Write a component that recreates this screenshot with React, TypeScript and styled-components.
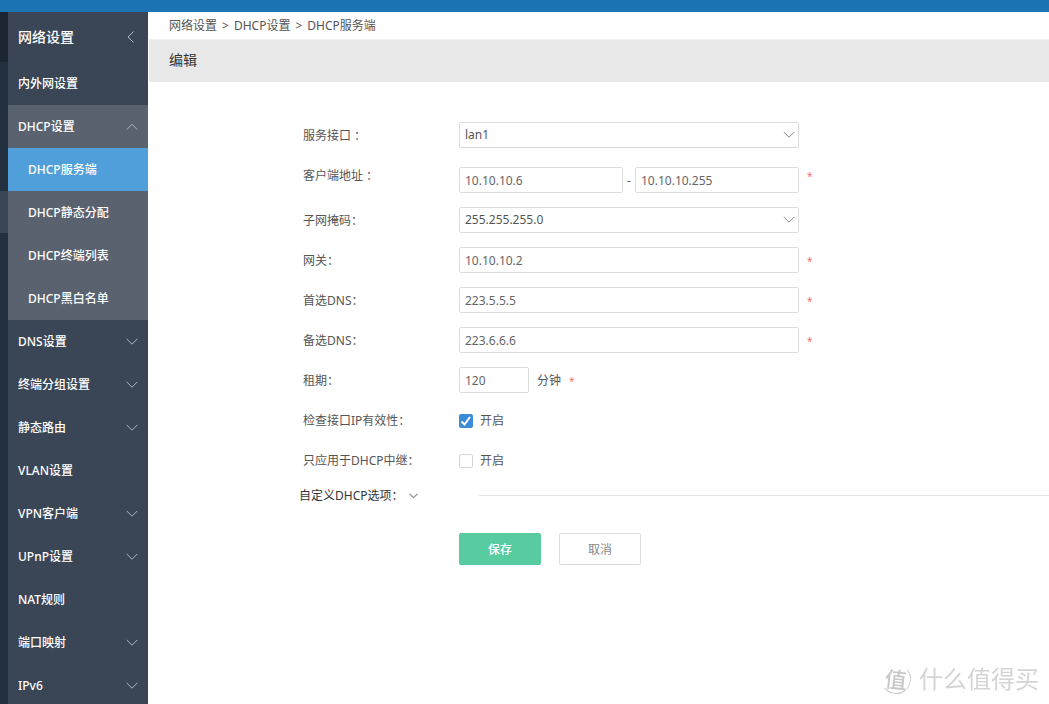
import React, { useState } from "react";
import styled, { createGlobalStyle } from "styled-components";

const GlobalStyle = createGlobalStyle`
  * { box-sizing: border-box; }
  body {
    margin: 0;
    background: #fff;
    color: #555;
    font: 12px/18px "Noto Sans", "Noto Sans CJK SC", sans-serif;
  }
  input, select, button { font: inherit; color: inherit; }
`;

const Page = styled.div`
  display: flex;
  flex-direction: column;
  height: 100vh;
`;

const TopBar = styled.header`
  flex: none;
  height: 12px;
  background: #1d74b4;
`;

const Body = styled.div`
  flex: 1;
  display: flex;
  min-height: 0;
`;

const Rail = styled.div`
  flex: none;
  width: 8px;
  background: #223040;
`;

const RailSlot = styled.div<{ $height: number; $color?: string }>`
  height: ${(p) => p.$height}px;
  background: ${(p) => p.$color || "transparent"};
`;

const Sidebar = styled.nav`
  flex: none;
  width: 140px;
  overflow-y: auto;
  scrollbar-width: none;
  background: #3a4656;
  color: #fff;
`;

const SidebarTitle = styled.div`
  display: flex;
  align-items: center;
  justify-content: space-between;
  height: 50px;
  padding: 0 13px 0 10px;
  font-size: 14px;
  font-weight: 500;
`;

const CollapseButton = styled.button`
  display: flex;
  padding: 0;
  border: 0;
  background: none;
  color: #b0b6bd;
`;

const MenuList = styled.ul`
  margin: 0;
  padding: 0;
  list-style: none;
`;

const MenuLink = styled.a<{ $variant?: "open" | "sub" | "active" }>`
  display: flex;
  align-items: center;
  justify-content: space-between;
  height: 43px;
  padding: 0 10px 0 ${(p) => (p.$variant === "sub" || p.$variant === "active" ? 20 : 10)}px;
  background: ${(p) =>
    p.$variant === "active" ? "#509fda" : p.$variant ? "#59626e" : "transparent"};
  color: #fff;
  font-weight: 500;
  text-decoration: none;
  svg { color: #b0b6bd; }
`;

const Main = styled.main`
  flex: 1;
  min-width: 0;
  overflow: auto;
  padding-left: 1px;
`;

const Breadcrumb = styled.div`
  display: flex;
  align-items: center;
  gap: 5px;
  height: 28px;
  padding-left: 20px;
  border-bottom: 1px solid #f0f0f0;
  a { color: inherit; text-decoration: none; }
`;

const PageTitle = styled.h1`
  margin: 0;
  padding: 0 20px;
  background: #e8e8e8;
  color: #333;
  font-size: 14px;
  font-weight: 400;
  line-height: 40px;
  height: 42px;
`;

const Form = styled.form`
  display: flex;
  flex-direction: column;
  gap: 12px;
  padding: 40px 0 0 154px;
`;

const Row = styled.div`
  display: flex;
  align-items: flex-start;
  line-height: 28px;
`;

const Label = styled.label`
  flex: none;
  width: 156px;
`;

const Fields = styled.div<{ $lowered?: boolean }>`
  flex: none;
  display: flex;
  align-items: flex-start;
  justify-content: space-between;
  width: 340px;
  padding-top: ${(p) => (p.$lowered ? 5 : 0)}px;
`;

const TextInput = styled.input<{ $width?: number }>`
  width: ${(p) => (p.$width ? p.$width + "px" : "100%")};
  height: 26px;
  padding: 2px 5px 0;
  border: 1px solid #dcdcdc;
  border-radius: 2px;
  background: #fff;
  color: #666;
  outline: none;
`;

const SelectWrap = styled.div`
  position: relative;
  width: 100%;
  height: 26px;
  svg {
    position: absolute;
    right: 4px;
    top: 9px;
    color: #888;
    pointer-events: none;
  }
`;

const Select = styled.select`
  display: block;
  width: 100%;
  height: 26px;
  padding: 0 24px 0 5px;
  border: 1px solid #dcdcdc;
  border-radius: 2px;
  background: #fff;
  color: #555;
  line-height: 24px;
  appearance: none;
  outline: none;
`;

const Required = styled.span`
  margin-left: 8px;
  color: #ff6b6b;
  font-size: 10px;
`;

const Unit = styled.span`
  margin-left: 8px;
`;

const CheckLabel = styled.label`
  display: flex;
  align-items: center;
  gap: 7px;
`;

const CheckBox = styled.input`
  appearance: none;
  width: 14px;
  height: 14px;
  margin: 0;
  border: 1px solid #d5d5d5;
  border-radius: 2px;
  background: #fff;
  &:checked {
    border-color: #3b8bd6;
    background: #3b8bd6;
  }
`;

const CheckHolder = styled.span`
  position: relative;
  display: flex;
  svg {
    position: absolute;
    inset: 0;
    pointer-events: none;
  }
`;

const OptionsRow = styled.div`
  display: flex;
  align-items: center;
  height: 18px;
  margin: -1px 0 0 -4px;
`;

const OptionsToggle = styled.button`
  flex: none;
  display: flex;
  align-items: center;
  gap: 5px;
  width: 180px;
  padding: 2px 0 0;
  border: 0;
  background: none;
  color: #333;
  svg { color: #999; }
`;

const Divider = styled.hr`
  flex: 1;
  margin: 0;
  border: 0;
  border-top: 1px solid #e5e5e5;
`;

const Actions = styled.div`
  display: flex;
  gap: 18px;
  padding: 17px 0 20px 156px;
`;

const ActionButton = styled.button<{ $primary?: boolean }>`
  width: 82px;
  height: 32px;
  padding: 2px 0 0;
  border: 1px solid ${(p) => (p.$primary ? "#58cba1" : "#dcdcdc")};
  border-radius: 2px;
  background: ${(p) => (p.$primary ? "#58cba1" : "#fff")};
  color: ${(p) => (p.$primary ? "#fff" : "#888")};
  font-weight: ${(p) => (p.$primary ? 500 : 400)};
`;

const Watermark = styled.div`
  position: fixed;
  right: 10px;
  bottom: 8px;
  display: flex;
  align-items: center;
  gap: 8px;
  color: #d4d4d4;
  font-size: 24px;
  line-height: 34px;
  pointer-events: none;
`;

const Seal = styled.span`
  display: flex;
  align-items: center;
  justify-content: center;
  width: 30px;
  height: 30px;
  border: 1px solid transparent;
  border-right-color: #d4d4d4;
  border-bottom-color: #c8c8c8;
  border-radius: 50%;
  color: #c8c8c8;
  font-size: 22px;
  font-weight: 500;
  transform: rotate(6deg);
`;

type Direction = "up" | "down" | "left";

function Chevron({ dir, small }: { dir: Direction; small?: boolean }) {
  if (dir === "left") {
    return (
      <svg width="8" height="14" viewBox="0 0 8 14" fill="none" stroke="currentColor">
        <path d="M6.5 1.500 1 7 6.5 12.500" />
      </svg>
    );
  }
  if (small) {
    return (
      <svg width="9" height="6" viewBox="0 0 9 6" fill="none" stroke="currentColor" strokeWidth="1.3">
        <path d="M.5.7 4.5 4.7 8.5.7" />
      </svg>
    );
  }
  return (
    <svg width="12" height="8" viewBox="0 0 12 8" fill="none" stroke="currentColor">
      <path d={dir === "up" ? "M.8 6.500 6 1.300 11.200 6.500" : "M.8 1 6 6.200 11.200 1"} />
    </svg>
  );
}

interface MenuItem {
  text: string;
  arrow?: Direction;
  variant?: "open" | "sub" | "active";
}

const menu: MenuItem[] = [
  { text: "内外网设置" },
  { text: "DHCP设置", arrow: "up", variant: "open" },
  { text: "DHCP服务端", variant: "active" },
  { text: "DHCP静态分配", variant: "sub" },
  { text: "DHCP终端列表", variant: "sub" },
  { text: "DHCP黑白名单", variant: "sub" },
  { text: "DNS设置", arrow: "down" },
  { text: "终端分组设置", arrow: "down" },
  { text: "静态路由", arrow: "down" },
  { text: "VLAN设置" },
  { text: "VPN客户端", arrow: "down" },
  { text: "UPnP设置", arrow: "down" },
  { text: "NAT规则" },
  { text: "端口映射", arrow: "down" },
  { text: "IPv6", arrow: "down" },
];

function TextRow({ id, label, value }: { id: string; label: string; value: string }) {
  return (
    <Row>
      <Label htmlFor={id}>{label}</Label>
      <Fields>
        <TextInput id={id} defaultValue={value} />
      </Fields>
      <Required>*</Required>
    </Row>
  );
}

function SelectRow({ id, label, value }: { id: string; label: string; value: string }) {
  return (
    <Row>
      <Label htmlFor={id}>{label}</Label>
      <Fields>
        <SelectWrap>
          <Select id={id} defaultValue={value}>
            <option>{value}</option>
          </Select>
          <Chevron dir="down" />
        </SelectWrap>
      </Fields>
    </Row>
  );
}

function CheckRow({ id, label, initial }: { id: string; label: string; initial: boolean }) {
  const [on, setOn] = useState(initial);
  return (
    <Row>
      <Label htmlFor={id}>{label}</Label>
      <CheckLabel>
        <CheckHolder>
          <CheckBox id={id} type="checkbox" checked={on} onChange={(e) => setOn(e.target.checked)} />
          {on && (
            <svg width="14" height="14" viewBox="0 0 14 14" fill="none" stroke="#fff" strokeWidth="2">
              <path d="M2.5 7.5 5.5 10.5 11 3" />
            </svg>
          )}
        </CheckHolder>
        开启
      </CheckLabel>
    </Row>
  );
}

export default function App() {
  return (
    <Page>
      <GlobalStyle />
      <TopBar />
      <Body>
        <Rail>
          <RailSlot $height={50} $color="#1c2632" />
          <RailSlot $height={129} />
          <RailSlot $height={42} $color="#3a4656" />
        </Rail>
        <Sidebar aria-label="网络设置">
          <SidebarTitle>
            网络设置
            <CollapseButton type="button" aria-label="收起">
              <Chevron dir="left" />
            </CollapseButton>
          </SidebarTitle>
          <MenuList>
            {menu.map((item) => (
              <li key={item.text}>
                <MenuLink href="#" $variant={item.variant}>
                  {item.text}
                  {item.arrow && <Chevron dir={item.arrow} />}
                </MenuLink>
              </li>
            ))}
          </MenuList>
        </Sidebar>
        <Main>
          <Breadcrumb>
            <a href="#">网络设置</a>
            <span>&gt;</span>
            <a href="#">DHCP设置</a>
            <span>&gt;</span>
            <a href="#">DHCP服务端</a>
          </Breadcrumb>
          <PageTitle>编辑</PageTitle>
          <Form onSubmit={(e) => e.preventDefault()}>
            <SelectRow id="iface" label="服务接口 ：" value="lan1" />
            <Row>
              <Label htmlFor="ip-start">客户端地址 ：</Label>
              <Fields $lowered>
                <TextInput id="ip-start" $width={164} defaultValue="10.10.10.6" />
                <span>-</span>
                <TextInput aria-label="客户端地址" $width={164} defaultValue="10.10.10.255" />
              </Fields>
              <Required>*</Required>
            </Row>
            <SelectRow id="mask" label="子网掩码：" value="255.255.255.0" />
            <TextRow id="gateway" label="网关：" value="10.10.10.2" />
            <TextRow id="dns1" label="首选DNS：" value="223.5.5.5" />
            <TextRow id="dns2" label="备选DNS：" value="223.6.6.6" />
            <Row>
              <Label htmlFor="lease">租期：</Label>
              <TextInput id="lease" $width={70} defaultValue="120" />
              <Unit>分钟</Unit>
              <Required>*</Required>
            </Row>
            <CheckRow id="check-ip" label="检查接口IP有效性：" initial={true} />
            <CheckRow id="relay" label="只应用于DHCP中继：" initial={false} />
            <OptionsRow>
              <OptionsToggle type="button">
                自定义DHCP选项：
                <Chevron dir="down" small />
              </OptionsToggle>
              <Divider />
            </OptionsRow>
            <Actions>
              <ActionButton type="submit" $primary>保存</ActionButton>
              <ActionButton type="button">取消</ActionButton>
            </Actions>
          </Form>
        </Main>
      </Body>
      <Watermark>
        <Seal>值</Seal>
        什么值得买
      </Watermark>
    </Page>
  );
}
